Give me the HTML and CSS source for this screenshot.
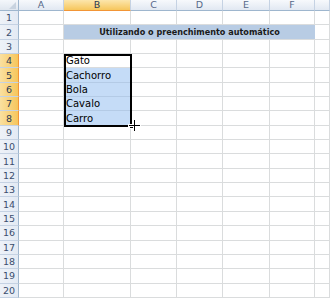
FILE: index.html
```html
<!DOCTYPE html>
<html>
<head>
<meta charset="utf-8">
<link rel="stylesheet" href="styles.css">
</head>
<body>
<div class="sheet">
  <div class="corner"><span class="tri"></span></div>
  <div class="ch">A</div><div class="ch sel">B</div><div class="ch">C</div><div class="ch">D</div><div class="ch">E</div><div class="ch">F</div><div class="ch last"></div>

  <div class="rh">1</div><div class="c"></div><div class="c"></div><div class="c"></div><div class="c"></div><div class="c"></div><div class="c"></div><div class="c"></div>
  <div class="rh">2</div><div class="c"></div><div class="title">Utilizando o preenchimento automático</div><div class="c"></div>
  <div class="rh">3</div><div class="c"></div><div class="c"></div><div class="c"></div><div class="c"></div><div class="c"></div><div class="c"></div><div class="c"></div>
  <div class="rh sel">4</div><div class="c"></div><div class="c txt">Gato</div><div class="c"></div><div class="c"></div><div class="c"></div><div class="c"></div><div class="c"></div>
  <div class="rh sel">5</div><div class="c"></div><div class="c txt hl">Cachorro</div><div class="c"></div><div class="c"></div><div class="c"></div><div class="c"></div><div class="c"></div>
  <div class="rh sel">6</div><div class="c"></div><div class="c txt hl">Bola</div><div class="c"></div><div class="c"></div><div class="c"></div><div class="c"></div><div class="c"></div>
  <div class="rh sel">7</div><div class="c"></div><div class="c txt hl">Cavalo</div><div class="c"></div><div class="c"></div><div class="c"></div><div class="c"></div><div class="c"></div>
  <div class="rh sel">8</div><div class="c"></div><div class="c txt hl">Carro</div><div class="c"></div><div class="c"></div><div class="c"></div><div class="c"></div><div class="c"></div>
  <div class="rh">9</div><div class="c"></div><div class="c"></div><div class="c"></div><div class="c"></div><div class="c"></div><div class="c"></div><div class="c"></div>
  <div class="rh">10</div><div class="c"></div><div class="c"></div><div class="c"></div><div class="c"></div><div class="c"></div><div class="c"></div><div class="c"></div>
  <div class="rh">11</div><div class="c"></div><div class="c"></div><div class="c"></div><div class="c"></div><div class="c"></div><div class="c"></div><div class="c"></div>
  <div class="rh">12</div><div class="c"></div><div class="c"></div><div class="c"></div><div class="c"></div><div class="c"></div><div class="c"></div><div class="c"></div>
  <div class="rh">13</div><div class="c"></div><div class="c"></div><div class="c"></div><div class="c"></div><div class="c"></div><div class="c"></div><div class="c"></div>
  <div class="rh">14</div><div class="c"></div><div class="c"></div><div class="c"></div><div class="c"></div><div class="c"></div><div class="c"></div><div class="c"></div>
  <div class="rh">15</div><div class="c"></div><div class="c"></div><div class="c"></div><div class="c"></div><div class="c"></div><div class="c"></div><div class="c"></div>
  <div class="rh">16</div><div class="c"></div><div class="c"></div><div class="c"></div><div class="c"></div><div class="c"></div><div class="c"></div><div class="c"></div>
  <div class="rh">17</div><div class="c"></div><div class="c"></div><div class="c"></div><div class="c"></div><div class="c"></div><div class="c"></div><div class="c"></div>
  <div class="rh">18</div><div class="c"></div><div class="c"></div><div class="c"></div><div class="c"></div><div class="c"></div><div class="c"></div><div class="c"></div>
  <div class="rh">19</div><div class="c"></div><div class="c"></div><div class="c"></div><div class="c"></div><div class="c"></div><div class="c"></div><div class="c"></div>
  <div class="rh">20</div><div class="c"></div><div class="c"></div><div class="c"></div><div class="c"></div><div class="c"></div><div class="c"></div><div class="c"></div>

  <div class="selbox"></div>
  <div class="handle"></div>
  <svg class="cursor" width="13" height="13" viewBox="0 0 13 13">
    <path d="M5 0h3v5h5v3h-5v5h-3v-5h-5v-3h5z" fill="#fff"/>
    <path d="M6 1h1v5h5v1h-5v5h-1v-5h-5v-1h5z" fill="#000"/>
  </svg>
</div>
</body>
</html>
```

FILE: styles.css
```css
html, body {
  margin: 0;
  padding: 0;
  background: #fff;
}
.sheet {
  position: relative;
  width: 330px;
  height: 298px;
  overflow: hidden;
  display: grid;
  grid-template-columns: 19px 45px 67px 46px 46px 47px 45px 15px;
  grid-template-rows: 11px repeat(20, 14.35px);
  font-family: "DejaVu Sans", Tahoma, sans-serif;
}
.corner {
  position: relative;
  background: linear-gradient(#f4f7fb, #dfe6ef);
  border-right: 1px solid #9eb6ce;
  border-bottom: 1px solid #9eb6ce;
  box-sizing: border-box;
}
.tri {
  position: absolute;
  right: 2px;
  bottom: 1px;
  width: 0;
  height: 0;
  border-left: 7px solid transparent;
  border-bottom: 7px solid #c8d3e0;
}
.ch {
  box-sizing: border-box;
  background: linear-gradient(#f7f9fc, #e1e8f2);
  border-right: 1px solid #c5d2e3;
  border-bottom: 1px solid #9eb6ce;
  color: #56698a;
  font-size: 9.5px;
  line-height: 10px;
  text-align: center;
}
.ch.sel {
  background: linear-gradient(#fce6ac, #f6c65c);
  border-bottom: 1px solid #f29536;
  color: #2a3a55;
}
.rh {
  box-sizing: border-box;
  background: linear-gradient(90deg, #eef2f8, #e3eaf4);
  border-right: 1px solid #9eb6ce;
  border-bottom: 1px solid #c5d2e3;
  color: #3b4e6e;
  font-size: 9.5px;
  display: flex;
  align-items: center;
  justify-content: center;
}
.rh.sel {
  background: linear-gradient(90deg, #fae0a0, #f6c65c);
  border-right: 1px solid #f29536;
  color: #2a3a55;
}
.c {
  box-sizing: border-box;
  border-right: 1px solid #dadcdd;
  border-bottom: 1px solid #dadcdd;
}
.txt {
  font-size: 10px;
  color: #000;
  padding-left: 2px;
  display: flex;
  align-items: center;
  white-space: nowrap;
}
.hl {
  background: #c5dcf7;
  border-bottom-color: #b4cbe6;
}
.title {
  grid-column: 3 / 8;
  box-sizing: border-box;
  background: #b8cce4;
  border-bottom: 1px solid #dadcdd;
  font-family: "DejaVu Sans Condensed", "DejaVu Sans", sans-serif;
  font-stretch: condensed;
  font-weight: bold;
  font-size: 9px;
  color: #1a1a1a;
  display: flex;
  align-items: center;
  justify-content: center;
  white-space: nowrap;
}
.selbox {
  position: absolute;
  left: 64px;
  top: 54px;
  width: 68px;
  height: 73px;
  border: 2px solid #000;
  box-sizing: border-box;
}
.handle {
  position: absolute;
  left: 129px;
  top: 124px;
  width: 5px;
  height: 5px;
  background: #000;
  border: 1px solid #fff;
  box-sizing: border-box;
}
.cursor {
  position: absolute;
  left: 128px;
  top: 119px;
}
```
